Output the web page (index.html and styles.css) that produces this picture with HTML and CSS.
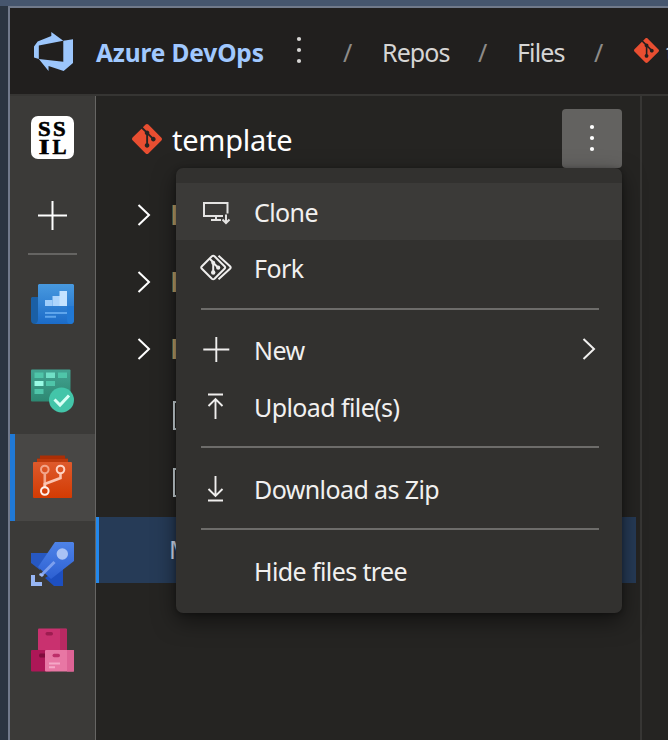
FILE: index.html
```html
<!DOCTYPE html>
<html lang="en">
<head>
<meta charset="utf-8">
<title>Azure DevOps - Files</title>
<link rel="stylesheet" href="styles.css">
</head>
<body>
<svg class="defs" width="0" height="0">
  <symbol id="git" viewBox="0 0 24 24"><path fill="#e84e31" d="M23.546 10.93L13.067.452c-.604-.603-1.582-.603-2.188 0L8.708 2.627l2.76 2.76c.645-.215 1.379-.07 1.889.441.516.515.658 1.258.438 1.9l2.658 2.66c.645-.223 1.387-.078 1.9.435.721.72.721 1.884 0 2.604-.719.719-1.881.719-2.6 0-.539-.541-.674-1.337-.404-1.996L12.86 8.955v6.525c.176.086.342.203.488.348.713.721.713 1.883 0 2.6-.719.721-1.889.721-2.609 0-.719-.719-.719-1.879 0-2.598.182-.18.387-.316.605-.406V8.835c-.217-.091-.424-.222-.6-.401-.545-.545-.676-1.342-.396-2.009L7.636 3.7.45 10.881c-.6.605-.6 1.584 0 2.189l10.48 10.477c.604.604 1.582.604 2.186 0l10.43-10.43c.605-.603.605-1.582 0-2.187"/></symbol>
  <symbol id="dots" viewBox="0 0 6 28"><g fill="currentColor"><circle cx="3" cy="3" r="2.1"/><circle cx="3" cy="14" r="2.1"/><circle cx="3" cy="25" r="2.1"/></g></symbol>
  <symbol id="chev" viewBox="0 0 14 22"><path d="M1.5 1 12 11 1.5 21" fill="none" stroke="currentColor" stroke-width="2"/></symbol>
</svg>
<div class="window">
  <header class="topbar">
    <svg class="logo" viewBox="0 0 24 24"><path fill="#9cc6fc" d="M0 8.877L2.247 5.91l8.405-3.416V.022l7.37 5.393L2.966 8.338v8.225L0 15.707zm24-4.45v14.651l-5.753 4.9-9.303-3.057v3.056l-5.978-7.416 15.057 1.798V5.415z"/></svg>
    <span class="brand">Azure DevOps</span>
    <svg class="dots"><use href="#dots"/></svg>
    <span class="slash">/</span>
    <span class="crumb c1">Repos</span>
    <span class="slash">/</span>
    <span class="crumb c2">Files</span>
    <span class="slash">/</span>
    <svg class="git-small"><use href="#git"/></svg>
    <span class="crumb">template</span>
  </header>
  <div class="body">
    <nav class="rail">
      <div class="org"><div class="avatar"><span class="ss">SS</span><span class="il"><b>I</b>L</span></div></div>
      <div class="add"><svg width="31" height="31" viewBox="0 0 31 31"><path d="M15.5 1v29M1 15.5h29" stroke="#fff" stroke-width="2"/></svg></div>
      <div class="rule"></div>
      <div class="hub">
        <svg viewBox="0 0 43 44">
          <defs><linearGradient id="b" x2="0" y2="1"><stop stop-color="#4899df"/><stop offset="1" stop-color="#1b6bc8"/></linearGradient></defs>
          <path d="M1 15h8v27H4q-4 0-4-4V16z" fill="#1a5fa5"/>
          <path d="M8 2h34l1 1v35q0 4-4 4H4q3-1 3-5V3z" fill="url(#b)"/>
          <path d="M36 24h7v14q0 4-3.500 4T36 38z" fill="#2178d4"/>
          <path d="M14 18h7.500v6H14z" fill="#9ecdfb"/><path d="M21.500 14H29v10h-7.500z" fill="#add5fc"/><path d="M28.500 9H36v15h-7.500z" fill="#c5e3ff"/>
          <path d="M14 31h22M14 34.700h11" stroke="#5ea5ec" stroke-width="2"/>
        </svg>
      </div>
      <div class="hub">
        <svg viewBox="0 0 43 44">
          <defs><linearGradient id="g" x2="0" y2="1"><stop stop-color="#43a391"/><stop offset="1" stop-color="#2d8872"/></linearGradient></defs>
          <rect y="0.500" width="39.500" height="32" rx="1" fill="url(#g)"/>
          <g fill="#4fc5a9"><path d="M3.500 3.500h9v5.500h-9zM27 3.500h9v5.500h-9zM15 12h9v5h-9zM3.500 20h9v5h-9z"/></g>
          <path d="M15 3.500h9v5.500h-9z" fill="#70dfc6"/><path d="M3.500 12h9v5h-9z" fill="#99fbe5"/>
          <circle cx="30.500" cy="31" r="12.500" fill="#43c5a9"/><path d="m23.500 30.500 5.500 5.500 9-9.500" fill="none" stroke="#d9fff5" stroke-width="3"/>
        </svg>
      </div>
      <div class="hub active">
        <svg viewBox="0 0 43 44">
          <defs><linearGradient id="o" x2="0" y2="1"><stop stop-color="#de5a2c"/><stop offset="1" stop-color="#d33b03"/></linearGradient></defs>
          <path d="M6 3.500h3V0.500h25v3h3V9H6z" fill="#ab2e05"/><path d="M6 4h31v4H6z" fill="#bb390c"/>
          <rect x="2" y="7" width="39" height="36" rx="1" fill="url(#o)"/>
          <g fill="none" stroke-width="2.600"><path d="M13.800 18v14" stroke="#f2a58a"/><path d="M29.500 18v5l-15.700 6v4" stroke="#fbc4b0"/><circle cx="13.800" cy="14.500" r="3.800" stroke="#f2a58a" stroke-width="2"/><circle cx="29.500" cy="14.500" r="3.800" stroke="#ffd4c5" stroke-width="2"/><circle cx="13.800" cy="36" r="3.800" stroke="#fff0ea" stroke-width="2"/></g>
        </svg>
      </div>
      <div class="hub">
        <svg viewBox="0 0 43 44">
          <defs><linearGradient id="r" x2="0" y2="1"><stop stop-color="#4e83e8"/><stop offset="1" stop-color="#2d60d2"/></linearGradient></defs>
          <path d="M0 11h18L9 28 0 21z" fill="#2758c1"/><path d="M14 36 32 24v20H23z" fill="#1d4fc0"/>
          <path d="M24 0h18l1 1v18L20 37 7 25z" fill="url(#r)"/>
          <circle cx="31.300" cy="12" r="5.700" fill="#a9c2f5"/><path d="m23.500 20-13 13" stroke="#7c9fee" stroke-width="3"/>
          <path d="M0 33h4v7h7v4H0z" fill="#98b7f5"/><path d="m9 31 4 2-2 2-3-2z" fill="#9cb9f7"/>
        </svg>
      </div>
      <div class="hub">
        <svg viewBox="0 0 43 44">
          <rect x="7" y="0.500" width="29" height="22" rx="1" fill="#c9316f"/><path d="M29 1h7v21h-7z" fill="#b92962"/>
          <rect y="22" width="20" height="21.500" rx="1" fill="#ad1757"/>
          <rect x="14" y="22" width="29" height="21.500" rx="1" fill="#e877a4"/><path d="M36 22h6.500l.5.500v21h-7z" fill="#dd6395"/>
          <rect x="14.500" y="4" width="7.500" height="3.500" rx="1.700" fill="#9d1c50"/><path d="M14 25.500v4H9q-2-2 0-4z" fill="#7f0c3c"/><rect x="21.500" y="25.700" width="7.500" height="3.500" rx="1.700" fill="#bd2f69"/>
          <path d="M18 35.500h11M18 39.300h6" stroke="#f5a8c7" stroke-width="2"/>
        </svg>
      </div>
    </nav>
    <main class="tree">
      <div class="tree-head">
        <svg class="git-big"><use href="#git"/></svg>
        <h1>template</h1>
        <button class="more" aria-label="More"><svg class="dots"><use href="#dots"/></svg></button>
      </div>
      <div class="row"><svg class="chev"><use href="#chev"/></svg><i class="folder"></i></div>
      <div class="row"><svg class="chev"><use href="#chev"/></svg><i class="folder"></i></div>
      <div class="row"><svg class="chev"><use href="#chev"/></svg><i class="folder"></i></div>
      <div class="row"><i class="file"></i></div>
      <div class="row"><i class="file"></i></div>
      <div class="row selected"><span class="md">M</span></div>

      <div class="menu">
        <div class="item hover">
          <svg viewBox="0 0 32 32"><g fill="none" stroke="#e4e3e2" stroke-width="2"><path d="M23 20H4V7h23.500V17.500M16 20v3.500M11 24h10"/><path d="M26 18.500V27M22.500 23.500l3.500 3.500 3.500-3.500"/></g></svg>
          <span>Clone</span>
        </div>
        <div class="item">
          <svg viewBox="0 0 32 32"><g fill="none" stroke="#efeeed" stroke-width="2"><path d="M11.900 4.300q1.300-1.100 2.600 0l10 9.900q1.300 1.300 0 2.600l-10 9.900q-1.300 1.100-2.600 0l-10-9.900q-1.300-1.300 0-2.600z"/><path d="M18.500 3.800 30 14.200q1.300 1.300 0 2.600L18.500 27.200"/><path d="m9.500 6.500 3.700 3.700v10.500M13.500 11l4.500 4.500"/></g><g fill="#efeeed"><circle cx="13.200" cy="10.700" r="2"/><circle cx="13.200" cy="20.500" r="2.200"/><circle cx="18.200" cy="15.700" r="2.100"/></g></svg>
          <span>Fork</span>
        </div>
        <hr>
        <div class="item">
          <svg viewBox="0 0 32 32"><path d="M16.300 3v25M3.300 15.500h26" stroke="#efeeed" stroke-width="1.900"/></svg>
          <span>New</span>
          <svg class="sub"><use href="#chev"/></svg>
        </div>
        <div class="item">
          <svg viewBox="0 0 32 32"><path d="M8 3.500h15M15.500 8v20M8.500 15l7-7 7 7" fill="none" stroke="#efeeed" stroke-width="1.900"/></svg>
          <span>Upload file(s)</span>
        </div>
        <hr>
        <div class="item">
          <svg viewBox="0 0 32 32"><path d="M8 27.500h15M15.500 3v20M8.500 16l7 7 7-7" fill="none" stroke="#efeeed" stroke-width="1.900"/></svg>
          <span>Download as Zip</span>
        </div>
        <hr>
        <div class="item">
          <svg viewBox="0 0 32 32"></svg>
          <span>Hide files tree</span>
        </div>
      </div>
    </main>
    <aside class="content"></aside>
  </div>
</div>
</body>
</html>
```
FILE: styles.css
```css
* { box-sizing: border-box; }
body {
  margin: 0;
  width: 668px;
  height: 740px;
  overflow: hidden;
  padding: 6px 0 0 8px;
  background: linear-gradient(#46566e 0 6px, #2b3541 6px);
  font-family: "Noto Sans", "Open Sans", sans-serif;
  color: #f1f0ef;
}
.defs { position: absolute; }
svg { display: block; flex: none; }
.window {
  height: 734px;
  border: solid #717a8b;
  border-width: 2px 0 0 2px;
  background: #252422;
  display: flex;
  flex-direction: column;
}
.topbar {
  height: 88px;
  flex: none;
  background: #211f1e;
  border-bottom: 2px solid #363533;
  display: flex;
  align-items: center;
  padding: 3px 0 0 24px;
  font-size: 25px;
  white-space: nowrap;
  overflow: hidden;
}
.topbar > * { flex: none; }
.logo { width: 39px; height: 39px; margin-top: -2px; }
.brand { margin-left: 23px; width: 200px; font-weight: 700; font-size: 24.5px; letter-spacing: -0.15px; color: #a0c8ff; }
.dots { width: 6px; height: 28px; }
.topbar .dots { margin: -6px 41px 0 0; color: #d6d5d4; }
.slash { color: #8d8b89; width: 39px; margin-top: -1px; }
.crumb { color: #d6d5d4; letter-spacing: -0.9px; margin-top: -2px; }
.c1 { width: 96px; }
.c2 { width: 77px; }
.git-small { width: 25px; height: 25px; margin: -4px 7px 0 1px; }
.body { flex: 1; display: flex; min-height: 0; }
.rail {
  width: 86px;
  flex: none;
  background: #3b3a38;
  border-right: 1px solid #666563;
}
.org { height: 83px; display: flex; justify-content: center; align-items: center; }
.avatar {
  width: 43px;
  height: 43px;
  border-radius: 7px;
  background: #fff;
  color: #000;
  display: flex;
  flex-direction: column;
  align-items: center;
  justify-content: center;
  font: 700 21px/18px "Liberation Serif", serif;
  -webkit-text-stroke: 0.6px #000;
}
.ss { letter-spacing: 2.2px; margin-right: -1px; transform: scaleX(1.08); }
.il { display: flex; gap: 3px; margin-left: 1px; }
.il b { display: inline-block; width: 10px; text-align: center; transform: scaleX(1.3); }
.add { height: 73px; margin-bottom: 1px; display: flex; justify-content: center; align-items: center; }
.rule { height: 2px; width: 49px; margin: 0 auto 6px; background: #656462; }
.hub { height: 86.5px; display: flex; justify-content: center; align-items: center; }
.hub svg { width: 43px; height: 44px; }
.hub.active { background: #484745; box-shadow: inset 5px 0 #2079d6; }
.tree { position: relative; width: 544px; flex: none; }
.tree-head { height: 85px; display: flex; align-items: center; padding-left: 36px; }
.git-big { width: 30px; height: 30px; }
h1 { margin: 2px 0 0 10px; flex: 1; font-size: 29px; font-weight: 400; letter-spacing: -0.25px; color: #fff; }
.more {
  width: 60px;
  height: 59px;
  margin-right: 18px;
  border: 0;
  border-radius: 4px;
  background: #636260;
  color: #fff;
  display: flex;
  align-items: center;
  justify-content: center;
}
.more .dots { margin-top: -2px; }
.row { height: 67px; display: flex; align-items: center; padding-left: 41px; }
.chev { width: 14px; height: 22px; margin-right: 21px; color: #fff; }
.folder { width: 30px; height: 20px; background: #c4a56c; border-left: 1px solid #4a6a5a; }
.file { width: 24px; height: 29px; margin-left: 36px; border: 2px solid #d5e0e4; }
.row.selected { width: 540px; height: 66px; margin-top: 1px; background: #263b57; border-left: 3px solid #2388ec; padding-left: 70px; }
.md { font-size: 25px; line-height: 30px; margin-top: -2px; color: #dce3f4; }
.menu {
  position: absolute;
  left: 80px;
  top: 72px;
  width: 446px;
  height: 445px;
  padding-top: 15px;
  border-radius: 7px;
  background: #32312f;
  box-shadow: 0 8px 22px rgba(0, 0, 0, .5), 0 1px 5px rgba(0, 0, 0, .3);
}
.item { height: 56.5px; display: flex; align-items: center; padding: 1px 26px 0 24px; font-size: 25px; white-space: nowrap; }
.item svg { width: 32px; height: 32px; margin-right: 22px; }
.item.hover { background: #3b3a38; }
.item .sub { width: 14px; height: 22px; margin: -2px 0 0 auto; }
.item span { letter-spacing: -0.6px; }
hr { width: 398px; height: 2px; margin: 11.75px 0 11.75px 25px; border: 0; background: #6d6c6a; }
.content { flex: 1; border-left: 2px solid #373634; }
```
